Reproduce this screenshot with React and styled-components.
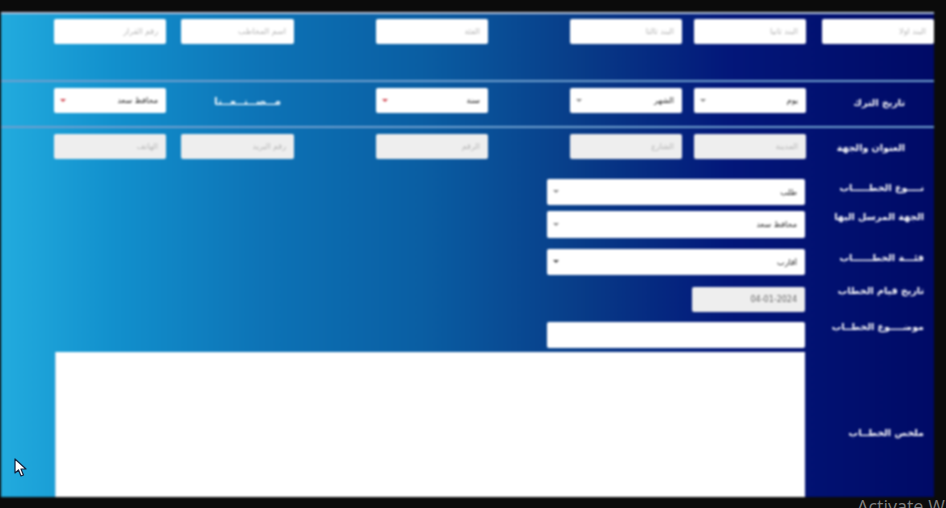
import React from 'react';
import styled, { createGlobalStyle } from 'styled-components';

const GlobalStyle = createGlobalStyle`
  html, body {
    margin: 0;
    padding: 0;
    height: 508px;
    overflow: hidden;
    background: #0b0b0b;
  }
  body {
    font-family: "Liberation Sans", "DejaVu Sans", sans-serif;
  }
`;

const Screen = styled.div`
  position: relative;
  width: 946px;
  height: 508px;
  padding: 12px 12px 11px 1px;
  box-sizing: border-box;
  background: #0b0b0b;
  overflow: hidden;
`;

const Panel = styled.form`
  width: 933px;
  height: 485px;
  box-sizing: border-box;
  border-top: 2px solid #b4c4de;
  background: linear-gradient(90deg, #22abde 0%, #1290cd 12%, #0d73b6 28%, #0a5ea3 45%, #083c88 62%, #03177a 78%, #000a66 100%);
  overflow: hidden;
  filter: blur(0.8px);
`;

const Row = styled.div`
  display: flex;
  direction: ltr;
  box-sizing: border-box;
  height: ${(p) => p.$height}px;
  padding: ${(p) => p.$top}px 0 0 53px;
  border-bottom: ${(p) => (p.$line ? '2px solid #6f9fce' : 'none')};
`;

const Cell = styled.div`
  flex: none;
  width: ${(p) => p.$width || 112}px;
  margin-right: ${(p) => p.$gap || 0}px;
`;

const Input = styled.input`
  display: block;
  width: 100%;
  height: ${(p) => p.$height || 25}px;
  box-sizing: border-box;
  padding: 0 8px;
  border: none;
  border-radius: 2px;
  direction: rtl;
  font: 8px "DejaVu Sans", sans-serif;
  color: #666;
  background: ${(p) => (p.disabled ? '#eeeeee' : '#ffffff')};
  &::placeholder {
    color: #b5b5b5;
  }
`;

const SelectBox = styled.div`
  position: relative;
  height: ${(p) => p.$height || 25}px;
  &::after {
    content: '';
    position: absolute;
    left: 6px;
    top: 50%;
    margin-top: -2px;
    border: 3px solid transparent;
    border-top-color: ${(p) => p.$arrow || '#8b8b8b'};
    pointer-events: none;
  }
`;

const Select = styled.select`
  display: block;
  width: 100%;
  height: 100%;
  box-sizing: border-box;
  padding: 0 8px 0 14px;
  border: none;
  border-radius: 2px;
  direction: rtl;
  appearance: none;
  background: #ffffff;
  color: #222;
  font: 8px "DejaVu Sans", sans-serif;
`;

const RowLabel = styled.label`
  flex: none;
  width: 112px;
  margin-top: ${(p) => p.$shift || 0}px;
  padding-right: 29px;
  box-sizing: border-box;
  color: #fff;
  font: bold 9.5px/24px "DejaVu Sans", sans-serif;
  direction: rtl;
  text-align: right;
  white-space: nowrap;
`;

const CenterLink = styled.a`
  flex: none;
  width: 113px;
  margin-right: 82px;
  padding-left: 20px;
  box-sizing: border-box;
  color: #e6f3fb;
  font: bold 11px/27px "DejaVu Sans", sans-serif;
  text-align: center;
  direction: rtl;
  white-space: nowrap;
`;

const Details = styled.div`
  display: flex;
  flex-direction: column;
  padding-top: 21px;
`;

const DetailRow = styled.div`
  display: flex;
  justify-content: flex-end;
  align-items: flex-start;
  margin-top: ${(p) => p.$top || 0}px;
`;

const Control = styled.div`
  width: ${(p) => p.$width}px;
`;

const DetailLabel = styled.label`
  flex: none;
  width: 129px;
  margin-top: ${(p) => p.$shift}px;
  padding-right: 10px;
  box-sizing: border-box;
  color: #fff;
  font: bold 9.5px/14px "DejaVu Sans", sans-serif;
  direction: rtl;
  text-align: right;
  white-space: nowrap;
`;

const Summary = styled.textarea`
  display: block;
  width: 100%;
  height: 145px;
  box-sizing: border-box;
  border: none;
  border-left: 1px solid #bcd6ea;
  resize: none;
  background: #fff;
  direction: rtl;
`;

const Cursor = styled.svg`
  position: absolute;
  left: 14px;
  top: 458px;
`;

const Watermark = styled.span`
  position: absolute;
  left: 857px;
  top: 494px;
  color: #7d7d7d;
  font: 18px "Open Sans", sans-serif;
  white-space: nowrap;
`;

const Option = ({ value }) => <option>{value}</option>;

function Choice({ value, arrow, height }) {
  return (
    <SelectBox $arrow={arrow} $height={height}>
      <Select defaultValue={value}>
        <Option value={value} />
      </Select>
    </SelectBox>
  );
}

export default function App() {
  return (
    <Screen>
      <GlobalStyle />
      <Panel>
        <Row $height={68} $top={5} $line>
          <Cell $gap={15}><Input placeholder="رقم القرار" /></Cell>
          <Cell $width={113} $gap={82}><Input placeholder="اسم المخاطب" /></Cell>
          <Cell $gap={82}><Input placeholder="الفئة" /></Cell>
          <Cell $gap={12}><Input placeholder="البند ثالثا" /></Cell>
          <Cell $gap={16}><Input placeholder="البند ثانيا" /></Cell>
          <Cell><Input placeholder="البند اولا" /></Cell>
        </Row>
        <Row $height={46} $top={6} $line>
          <Cell $gap={15}><Choice value="محافظ سعد" arrow="#d0454f" /></Cell>
          <CenterLink>مــصــنــعــنا</CenterLink>
          <Cell $gap={82}><Choice value="سنة" arrow="#d0454f" /></Cell>
          <Cell $gap={12}><Choice value="الشهر" /></Cell>
          <Cell $gap={16}><Choice value="يوم" /></Cell>
          <RowLabel $shift={3}>تاريخ الترك</RowLabel>
        </Row>
        <Row $height={30} $top={6}>
          <Cell $gap={15}><Input disabled placeholder="الهاتف" /></Cell>
          <Cell $width={113} $gap={82}><Input disabled placeholder="رقم البريد" /></Cell>
          <Cell $gap={82}><Input disabled placeholder="الرقم" /></Cell>
          <Cell $gap={12}><Input disabled placeholder="الشارع" /></Cell>
          <Cell $gap={16}><Input disabled placeholder="المدينة" /></Cell>
          <RowLabel $shift={2}>العنوان والجهة</RowLabel>
        </Row>
        <Details>
          <DetailRow>
            <Control $width={258}><Choice value="طلب" height={26} /></Control>
            <DetailLabel $shift={2}>نــــوع الخطـــــاب</DetailLabel>
          </DetailRow>
          <DetailRow $top={6}>
            <Control $width={258}><Choice value="محافظ سعد" height={27} /></Control>
            <DetailLabel $shift={-1}>الجهة المرسل اليها</DetailLabel>
          </DetailRow>
          <DetailRow $top={11}>
            <Control $width={258}><Choice value="أقارب" arrow="#444" height={26} /></Control>
            <DetailLabel $shift={2}>فئـــة الخطــــــاب</DetailLabel>
          </DetailRow>
          <DetailRow $top={12}>
            <Control $width={113}><Input disabled defaultValue="04-01-2024" /></Control>
            <DetailLabel $shift={-3}>تاريخ قيام الخطاب</DetailLabel>
          </DetailRow>
          <DetailRow $top={10}>
            <Control $width={258}><Input $height={26} /></Control>
            <DetailLabel $shift={-2}>موضــــوع الخطــاب</DetailLabel>
          </DetailRow>
          <DetailRow $top={4}>
            <Control $width={750}><Summary /></Control>
            <DetailLabel $shift={74}>ملخص الخطــاب</DetailLabel>
          </DetailRow>
        </Details>
      </Panel>
      <Cursor width="14" height="20" viewBox="0 0 14 20">
        <path d="M1 1 L1 15 L4.5 12 L7 18 L9.5 17 L7 11 L12 11 Z" fill="#fff" stroke="#12233f" strokeWidth="1.2" strokeLinejoin="round" />
      </Cursor>
      <Watermark>Activate Windows</Watermark>
    </Screen>
  );
}
